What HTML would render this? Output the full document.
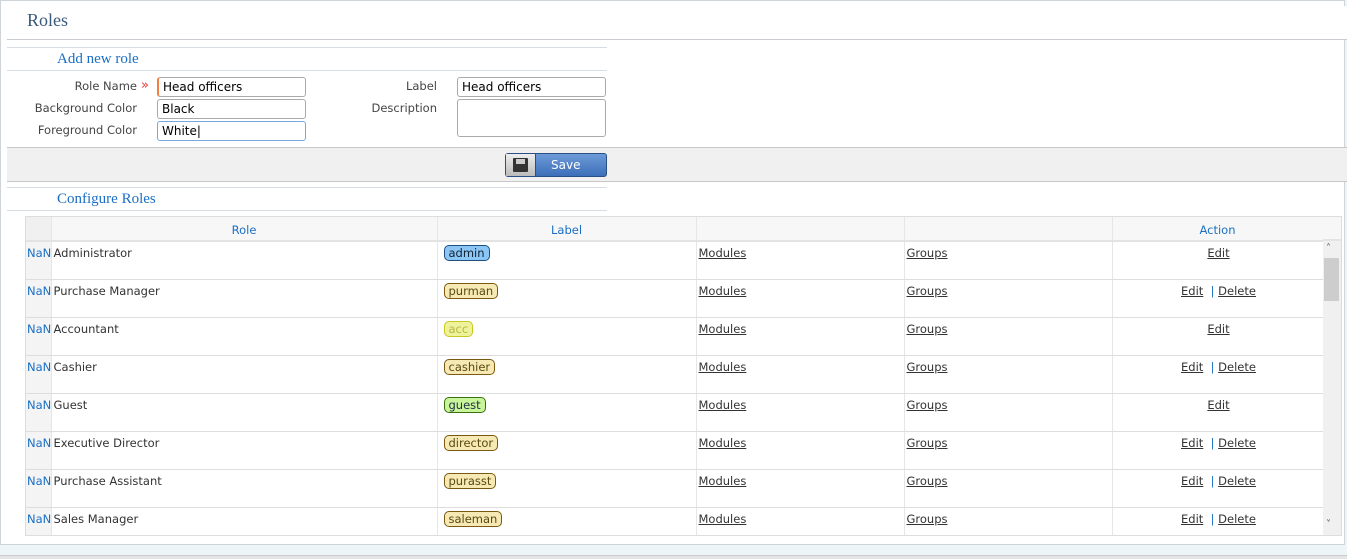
<!DOCTYPE html>
<html><head><style>
*{margin:0;padding:0;box-sizing:border-box}
body{width:1347px;height:559px;background:#eef5f9;position:relative;overflow:hidden;font-family:"DejaVu Sans",sans-serif;font-size:11.5px;color:#333}
.a{position:absolute}
#panel{left:6px;top:5px;width:1345px;height:545px;background:#fff;border:1px solid #cfd4d8}
.t{font-family:"Liberation Serif",serif;color:#1a6fc4}
.lbl{font-size:11.5px;color:#444;text-align:right;width:130px}
.inp{height:20px;border:1px solid #aaa;border-radius:3px;background:#fff;font-size:12px;color:#000;padding:2px 4px;line-height:15px}
.hl{height:1px;background:#d8dde5}
#wrap{position:absolute;left:25px;top:216px;width:1317px;height:320px;border:1px solid #ddd;overflow:hidden}
table{border-collapse:collapse;position:absolute;left:0;top:0;width:1297px;table-layout:fixed}
td,th{border-right:1px solid #e6e6e6;border-bottom:1px solid #ddd;font-weight:normal}
th{height:24px;color:#1a6fc4;background:#f7f7f7;font-size:11.5px;font-family:"DejaVu Sans",sans-serif;border-bottom:2px solid #e3e3e3;padding-top:2px}
td{height:38px;vertical-align:top;padding-top:4px;padding-left:2px}
td.n{background:#f4f4f4;color:#1a6fc4;padding-left:1px}
a{color:#333;text-decoration:underline}
.b{display:inline-block;border:1px solid #7a5a10;border-radius:5px;background:#f7e9b4;color:#5a4a10;padding:0 4px;line-height:14px;margin-left:4px;margin-top:-1px}
</style></head><body>
<div id="panel"></div>
<div class="a" style="left:7px;top:6px;width:1340px;height:34px;border-bottom:1px solid #c8ccd0;background:#fff"></div>
<div class="a t" style="left:27px;top:10px;font-size:18px;color:#3a5a7a">Roles</div>
<div class="a hl" style="left:7px;top:47px;width:600px"></div>
<div class="a t" style="left:57px;top:51px;font-size:15px">Add new role</div>
<div class="a hl" style="left:7px;top:70px;width:600px"></div>
<div class="a lbl" style="left:7px;top:79px">Role Name</div>
<div class="a" style="left:141px;top:78px;color:#e33;font-size:13px">»</div>
<div class="a inp" style="left:157px;top:77px;width:149px;border-left:2px solid #f08040">Head officers</div>
<div class="a lbl" style="left:7px;top:101px">Background Color</div>
<div class="a inp" style="left:157px;top:99px;width:149px">Black</div>
<div class="a lbl" style="left:7px;top:123px">Foreground Color</div>
<div class="a inp" style="left:157px;top:121px;width:149px;border-color:#7aa7e0">White|</div>
<div class="a lbl" style="left:307px;top:79px">Label</div>
<div class="a inp" style="left:457px;top:77px;width:149px">Head officers</div>
<div class="a lbl" style="left:307px;top:101px">Description</div>
<div class="a inp" style="left:457px;top:99px;width:149px;height:38px"></div>
<div class="a" style="left:7px;top:147px;width:1340px;height:35px;background:#f0f0f0;border-top:1px solid #c8c8c8;border-bottom:1px solid #c8c8c8"></div>
<div class="a" style="left:505px;top:153px;width:102px;height:24px;border:1px solid #2a4f85;border-radius:3px;background:linear-gradient(#6d9bd8,#3c6fb9);color:#fff;font-size:12px">
<div class="a" style="left:0;top:0;width:30px;height:22px;background:linear-gradient(#eee,#bbb);border-right:1px solid #2a4f85"></div>
<div class="a" style="left:7px;top:4px;width:15px;height:14px;background:#333;border-radius:1px"></div>
<div class="a" style="left:10px;top:5px;width:9px;height:5px;background:#ccc"></div>
<div class="a" style="left:45px;top:4px">Save</div></div>
<div class="a hl" style="left:7px;top:187px;width:600px"></div>
<div class="a t" style="left:57px;top:191px;font-size:15px">Configure Roles</div>
<div class="a hl" style="left:7px;top:210px;width:600px"></div>
<div id="wrap">
<table>
<colgroup><col style="width:25px"><col style="width:386px"><col style="width:259px"><col style="width:208px"><col style="width:208px"><col style="width:211px"></colgroup>
<tr><th style="background:#f0f0f0"></th><th>Role</th><th>Label</th><th></th><th></th><th>Action</th></tr>
<tr><td class="n">NaN</td><td>Administrator</td><td><span class="b" style="background:#8cc6f5;border-color:#1d4f80;color:#123">admin</span></td><td><a>Modules</a></td><td><a>Groups</a></td><td style="text-align:center"><a>Edit</a></td></tr>
<tr><td class="n">NaN</td><td>Purchase Manager</td><td><span class="b">purman</span></td><td><a>Modules</a></td><td><a>Groups</a></td><td style="text-align:center"><a>Edit</a> &nbsp;<span style="color:#1a6fc4">|</span> <a>Delete</a></td></tr>
<tr><td class="n">NaN</td><td>Accountant</td><td><span class="b" style="background:#eef29a;border-color:#c8c820;color:#b8b840">acc</span></td><td><a>Modules</a></td><td><a>Groups</a></td><td style="text-align:center"><a>Edit</a></td></tr>
<tr><td class="n">NaN</td><td>Cashier</td><td><span class="b">cashier</span></td><td><a>Modules</a></td><td><a>Groups</a></td><td style="text-align:center"><a>Edit</a> &nbsp;<span style="color:#1a6fc4">|</span> <a>Delete</a></td></tr>
<tr><td class="n">NaN</td><td>Guest</td><td><span class="b" style="background:#c8f59a;border-color:#3a7010;color:#234">guest</span></td><td><a>Modules</a></td><td><a>Groups</a></td><td style="text-align:center"><a>Edit</a></td></tr>
<tr><td class="n">NaN</td><td>Executive Director</td><td><span class="b">director</span></td><td><a>Modules</a></td><td><a>Groups</a></td><td style="text-align:center"><a>Edit</a> &nbsp;<span style="color:#1a6fc4">|</span> <a>Delete</a></td></tr>
<tr><td class="n">NaN</td><td>Purchase Assistant</td><td><span class="b">purasst</span></td><td><a>Modules</a></td><td><a>Groups</a></td><td style="text-align:center"><a>Edit</a> &nbsp;<span style="color:#1a6fc4">|</span> <a>Delete</a></td></tr>
<tr><td class="n" style="border-bottom:none">NaN</td><td style="border-bottom:none">Sales Manager</td><td style="border-bottom:none"><span class="b">saleman</span></td><td style="border-bottom:none"><a>Modules</a></td><td style="border-bottom:none"><a>Groups</a></td><td style="text-align:center;border-bottom:none"><a>Edit</a> &nbsp;<span style="color:#1a6fc4">|</span> <a>Delete</a></td></tr>
</table>
<div class="a" style="left:1297px;top:0;width:20px;height:24px;background:#f7f7f7;border-bottom:2px solid #e3e3e3"></div>
<div class="a" style="left:1297px;top:24px;width:18px;height:296px;background:#f0f0f0"></div>
<div class="a" style="left:1298px;top:41px;width:15px;height:43px;background:#cdcdcd"></div>
<div class="a" style="left:1300px;top:26px;font-size:10px;color:#555">˄</div>
<div class="a" style="left:1300px;top:302px;font-size:10px;color:#555">˅</div>
</div>
<div class="a" style="left:0;top:555px;width:1347px;height:4px;background:#e4e4e4;border-top:1px solid #ccc"></div>
</body></html>
